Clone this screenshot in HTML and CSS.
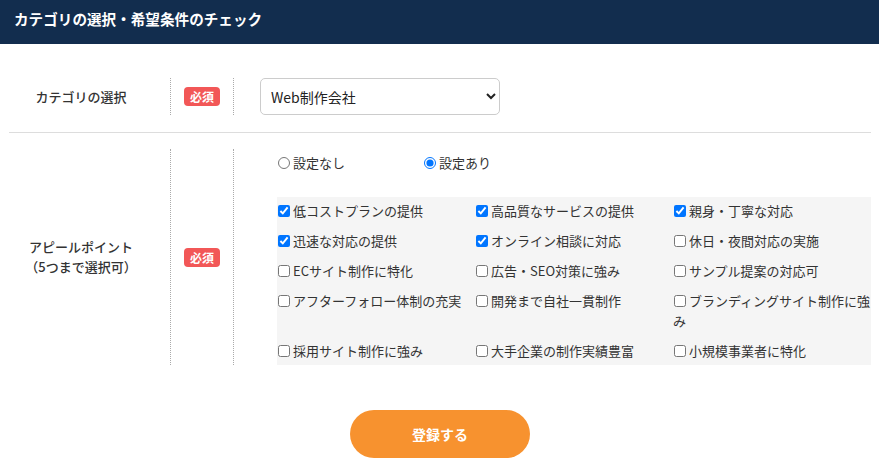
FILE: index.html
```
<!doctype html>
<html>
<head>
<meta charset="utf-8">
<title>カテゴリの選択・希望条件のチェック</title>
<link rel="stylesheet" href="styles.css">
</head>
<body>
<div class="page-head">
    <h1 class="page-title">カテゴリの選択・希望条件のチェック</h1>
</div>
<form class="entry-form" onsubmit="return false;">
    <ul class="form-list">
        <li class="form-row form-row-line">
            <div class="row-label">カテゴリの選択</div>
            <div class="row-need"><em class="need-tag">必須</em></div>
            <div class="row-value">
                <select class="cat-select">
                    <option>Web制作会社</option>
                    <option>システム開発会社</option>
                    <option>デザイン事務所</option>
                </select>
            </div>
        </li>
        <li class="form-row">
            <div class="row-label">アピールポイント<br>（5つまで選択可）</div>
            <div class="row-need"><em class="need-tag">必須</em></div>
            <div class="row-value">
                <div class="appeal-box">
                    <div class="radio-line">
                        <label class="radio-item"><input type="radio" name="appeal">設定なし</label>
                        <label class="radio-item"><input type="radio" name="appeal" checked>設定あり</label>
                    </div>
                    <ul class="check-grid">
                        <li class="check-item"><label><input type="checkbox" checked>低コストプランの提供</label></li>
                        <li class="check-item"><label><input type="checkbox" checked>高品質なサービスの提供</label></li>
                        <li class="check-item"><label><input type="checkbox" checked>親身・丁寧な対応</label></li>
                        <li class="check-item"><label><input type="checkbox" checked>迅速な対応の提供</label></li>
                        <li class="check-item"><label><input type="checkbox" checked>オンライン相談に対応</label></li>
                        <li class="check-item"><label><input type="checkbox">休日・夜間対応の実施</label></li>
                        <li class="check-item"><label><input type="checkbox">ECサイト制作に特化</label></li>
                        <li class="check-item"><label><input type="checkbox">広告・SEO対策に強み</label></li>
                        <li class="check-item"><label><input type="checkbox">サンプル提案の対応可</label></li>
                        <li class="check-item"><label><input type="checkbox">アフターフォロー体制の充実</label></li>
                        <li class="check-item"><label><input type="checkbox">開発まで自社一貫制作</label></li>
                        <li class="check-item"><label><input type="checkbox">ブランディングサイト制作に強み</label></li>
                        <li class="check-item"><label><input type="checkbox">採用サイト制作に強み</label></li>
                        <li class="check-item"><label><input type="checkbox">大手企業の制作実績豊富</label></li>
                        <li class="check-item"><label><input type="checkbox">小規模事業者に特化</label></li>
                    </ul>
                </div>
            </div>
        </li>
    </ul>
    <div class="btn-box">
        <button class="submit-btn" type="submit">登録する</button>
    </div>
</form>
</body>
</html>
```

FILE: styles.css
```
html {
    color:#333;
    background:#fff;
}
body,div,ul,li,h1,form,p {
    margin:0;
    padding:0;
}
body {
    font: 13px/20px "Noto Sans CJK JP", "Noto Sans", sans-serif;
}
ul,li{list-style: none;}
em{font-style: normal;}

.page-head{height: 44px;background: #122d4e;padding: 8px 14px 0;box-sizing: border-box;}
.page-title{font-size: 14.6px;line-height: 22px;font-weight: 700;color: #fff;}

.entry-form{padding: 18px 8px 0 9px;}
.form-row{display: flex;padding: 16px 0 17px;}
.form-row-line{border-bottom: 1px solid #ddd;}
.row-label{width: 144px;padding-right: 17px;display: flex;align-items: center;justify-content: center;text-align: center;font-weight: 500;color: #333;}
.row-need{width: 62px;border-left: 1px dotted #aaa;border-right: 1px dotted #aaa;display: flex;align-items: center;justify-content: center;}
.need-tag{display: inline-block;width: 36px;height: 19px;line-height: 19px;border-radius: 4px;background: #f25757;color: #fff;font-size: 12px;font-weight: 700;text-align: center;}
.row-value{flex: 1;padding-left: 26px;}

.cat-select{width: 240px;height: 37px;padding: 0 6px;border: 1px solid #ccc;border-radius: 5px;background: #fff;font: 14px "Noto Sans CJK JP", "Noto Sans", sans-serif;color: #222;outline: none;}

.appeal-box{margin-left: 17px;}
.radio-line{padding-top: 4px;height: 20px;margin-bottom: 24px;}
.radio-item{display: inline-block;width: 143px;}
.radio-item input{margin: 0 3px 0 1px;width: 12px;height: 12px;vertical-align: -1px;}

.check-grid{display: grid;grid-template-columns: repeat(3, 1fr);row-gap: 10px;background: #f5f5f5;padding: 4px 0;}
.check-item{color: #333;}
.check-item input{margin: 0 3px 0 1px;width: 12px;height: 12px;vertical-align: -1px;}

.btn-box{text-align: center;margin-top: 28px;}
.submit-btn{width: 180px;height: 48px;border: 0 none;border-radius: 24px;background: #f7922f;color: #fff;font: 700 14px "Noto Sans CJK JP", "Noto Sans", sans-serif;cursor: pointer;}
```
